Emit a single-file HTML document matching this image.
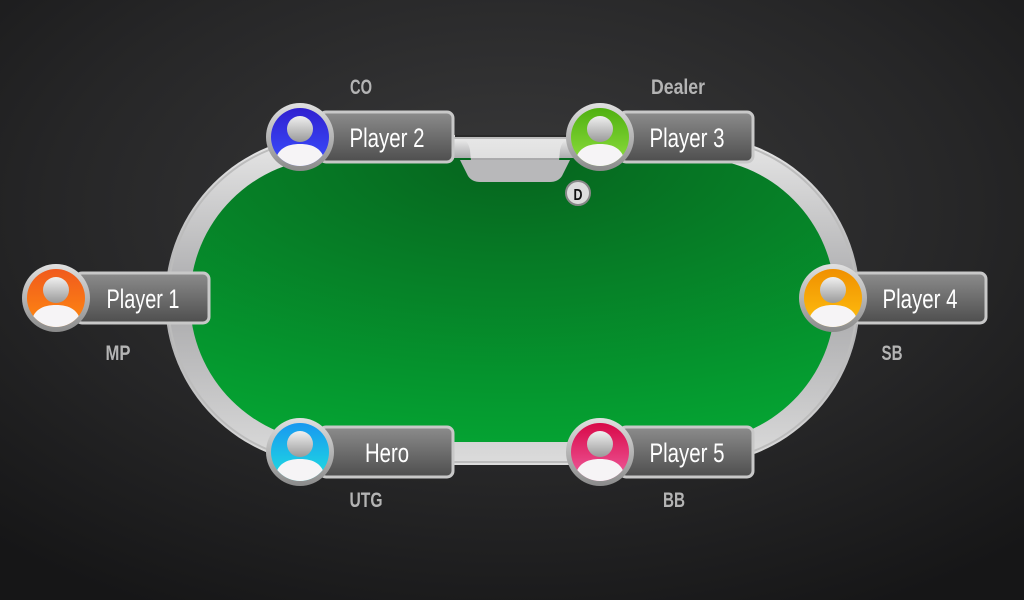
<!DOCTYPE html>
<html><head><meta charset="utf-8"><style>
html,body{margin:0;padding:0;width:1024px;height:600px;overflow:hidden;background:#1a1a1a}
svg{display:block}
text{font-family:"Liberation Sans Narrow","Liberation Sans",sans-serif}
</style></head><body>
<svg width="1024" height="600" viewBox="0 0 1024 600" xmlns="http://www.w3.org/2000/svg">
<defs>
<radialGradient id="bg" cx="50%" cy="35%" r="75%">
<stop offset="0" stop-color="#3a3a3b"/><stop offset="0.6" stop-color="#262627"/><stop offset="1" stop-color="#161617"/>
</radialGradient>
<linearGradient id="rail" x1="0" y1="0" x2="0" y2="1">
<stop offset="0" stop-color="#e8e8e8"/><stop offset="0.5" stop-color="#a9a9ab"/><stop offset="1" stop-color="#dcdcdc"/>
</linearGradient>
<radialGradient id="felt" cx="50%" cy="0%" r="100%">
<stop offset="0" stop-color="#06641e"/><stop offset="1" stop-color="#05a232"/>
</radialGradient>
<linearGradient id="box" x1="0" y1="0" x2="0" y2="1">
<stop offset="0" stop-color="#8c8c8c"/><stop offset="1" stop-color="#4e4e4e"/>
</linearGradient>
<linearGradient id="ring" x1="0" y1="0" x2="0" y2="1">
<stop offset="0" stop-color="#e0e0e0"/><stop offset="1" stop-color="#8a8a8a"/>
</linearGradient>
<linearGradient id="head" x1="0" y1="0" x2="0" y2="1">
<stop offset="0" stop-color="#f0f0f0"/><stop offset="1" stop-color="#9a9a9a"/>
</linearGradient>
<linearGradient id="c1" x1="0" y1="0" x2="0" y2="1"><stop offset="0" stop-color="#f05a1e"/><stop offset="1" stop-color="#ff8a10"/></linearGradient>
<linearGradient id="c2" x1="0" y1="0" x2="0" y2="1"><stop offset="0" stop-color="#3020d0"/><stop offset="1" stop-color="#3a50ff"/></linearGradient>
<linearGradient id="c3" x1="0" y1="0" x2="0" y2="1"><stop offset="0" stop-color="#50b010"/><stop offset="1" stop-color="#90e040"/></linearGradient>
<linearGradient id="c4" x1="0" y1="0" x2="0" y2="1"><stop offset="0" stop-color="#f09000"/><stop offset="1" stop-color="#ffc010"/></linearGradient>
<linearGradient id="c5" x1="0" y1="0" x2="0" y2="1"><stop offset="0" stop-color="#d80848"/><stop offset="1" stop-color="#f060a0"/></linearGradient>
<linearGradient id="c6" x1="0" y1="0" x2="0" y2="1"><stop offset="0" stop-color="#1898f0"/><stop offset="1" stop-color="#20e0e0"/></linearGradient>
<clipPath id="av"><circle r="29"/></clipPath>
<g id="person">
<g clip-path="url(#av)">
<circle cx="0" cy="-8" r="13" fill="url(#head)"/>
<path d="M-26,34 C-26,12 -14,7 0,7 C14,7 26,12 26,34 Z" fill="#f6f4f6"/>
</g>
</g>
</defs>
<rect width="1024" height="600" fill="url(#bg)"/>
<!-- table -->
<rect x="165" y="135" width="695" height="330" rx="165" fill="url(#rail)"/>
<rect x="168" y="138" width="689" height="324" rx="162" fill="none" stroke="#bcbcbc" stroke-width="2"/>
<rect x="190" y="158" width="645" height="284" rx="142" fill="url(#felt)"/>
<path d="M452,140 L462,140 Q468,140 470,150 L472,172 Q474,178 482,178 L548,178 Q556,178 558,172 L560,150 Q562,140 568,140 L578,140 L578,158 L452,158 Z" fill="url(#rail)"/>
<path d="M460,160 L468,176 Q472,182 480,182 L550,182 Q558,182 562,176 L570,160 Z" fill="#b8b8ba"/>
<path d="M455,136 L570,136" stroke="#2a2a2a" stroke-width="2"/>
<!-- dealer button -->
<circle cx="578" cy="193" r="12" fill="#ddd" stroke="#888" stroke-width="2"/>
<text x="578" y="200" text-anchor="middle" font-size="16" font-weight="bold" fill="#111" textLength="9" lengthAdjust="spacingAndGlyphs">D</text>
<!-- players -->
<g transform="translate(300,137)">
<rect x="20" y="-25" width="133" height="50" rx="6" fill="url(#box)" stroke="#c8c8c8" stroke-width="3"/>
<circle r="34" fill="url(#ring)"/><circle r="29" fill="url(#c2)"/><use href="#person"/>
<text x="87" y="10" text-anchor="middle" font-size="27" fill="#fff" textLength="75" lengthAdjust="spacingAndGlyphs">Player 2</text>
</g>
<g transform="translate(600,137)">
<rect x="20" y="-25" width="133" height="50" rx="6" fill="url(#box)" stroke="#c8c8c8" stroke-width="3"/>
<circle r="34" fill="url(#ring)"/><circle r="29" fill="url(#c3)"/><use href="#person"/>
<text x="87" y="10" text-anchor="middle" font-size="27" fill="#fff" textLength="75" lengthAdjust="spacingAndGlyphs">Player 3</text>
</g>
<g transform="translate(56,298)">
<rect x="20" y="-25" width="133" height="50" rx="6" fill="url(#box)" stroke="#c8c8c8" stroke-width="3"/>
<circle r="34" fill="url(#ring)"/><circle r="29" fill="url(#c1)"/><use href="#person"/>
<text x="87" y="10" text-anchor="middle" font-size="27" fill="#fff" textLength="73" lengthAdjust="spacingAndGlyphs">Player 1</text>
</g>
<g transform="translate(833,298)">
<rect x="20" y="-25" width="133" height="50" rx="6" fill="url(#box)" stroke="#c8c8c8" stroke-width="3"/>
<circle r="34" fill="url(#ring)"/><circle r="29" fill="url(#c4)"/><use href="#person"/>
<text x="87" y="10" text-anchor="middle" font-size="27" fill="#fff" textLength="75" lengthAdjust="spacingAndGlyphs">Player 4</text>
</g>
<g transform="translate(300,452)">
<rect x="20" y="-25" width="133" height="50" rx="6" fill="url(#box)" stroke="#c8c8c8" stroke-width="3"/>
<circle r="34" fill="url(#ring)"/><circle r="29" fill="url(#c6)"/><use href="#person"/>
<text x="87" y="10" text-anchor="middle" font-size="27" fill="#fff" textLength="44" lengthAdjust="spacingAndGlyphs">Hero</text>
</g>
<g transform="translate(600,452)">
<rect x="20" y="-25" width="133" height="50" rx="6" fill="url(#box)" stroke="#c8c8c8" stroke-width="3"/>
<circle r="34" fill="url(#ring)"/><circle r="29" fill="url(#c5)"/><use href="#person"/>
<text x="87" y="10" text-anchor="middle" font-size="27" fill="#fff" textLength="75" lengthAdjust="spacingAndGlyphs">Player 5</text>
</g>
<!-- position labels -->
<g font-size="21" font-weight="bold" fill="#b4b4b4" text-anchor="middle">
<text x="361" y="94" textLength="22" lengthAdjust="spacingAndGlyphs">CO</text>
<text x="678" y="94" textLength="54" lengthAdjust="spacingAndGlyphs">Dealer</text>
<text x="118" y="360" textLength="25" lengthAdjust="spacingAndGlyphs">MP</text>
<text x="892" y="360" textLength="21" lengthAdjust="spacingAndGlyphs">SB</text>
<text x="366" y="507" textLength="33" lengthAdjust="spacingAndGlyphs">UTG</text>
<text x="674" y="507" textLength="22" lengthAdjust="spacingAndGlyphs">BB</text>
</g>
</svg>
</body></html>
